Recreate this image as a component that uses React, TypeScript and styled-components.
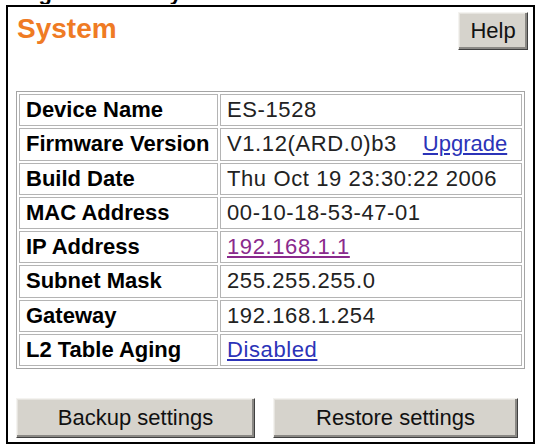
import styled, { createGlobalStyle } from "styled-components";

const GlobalStyle = createGlobalStyle`
  html, body {
    margin: 0;
    padding: 0;
    background: #ffffff;
  }
  body {
    font-family: "Liberation Sans", Arial, sans-serif;
  }
`;

type Row = {
  label: string;
  value: string;
  kind?: "link" | "visited";
  extra?: string;
};

const rows: Row[] = [
  { label: "Device Name", value: "ES-1528" },
  { label: "Firmware Version", value: "V1.12(ARD.0)b3", extra: "Upgrade" },
  { label: "Build Date", value: "Thu Oct 19 23:30:22 2006" },
  { label: "MAC Address", value: "00-10-18-53-47-01" },
  { label: "IP Address", value: "192.168.1.1", kind: "visited" },
  { label: "Subnet Mask", value: "255.255.255.0" },
  { label: "Gateway", value: "192.168.1.254" },
  { label: "L2 Table Aging", value: "Disabled", kind: "link" },
];

const App = () => {
  return (
    <>
      <GlobalStyle />
      <Caption>
        <span>Figure 32</span>
        <span>System</span>
      </Caption>
      <Frame>
        <Header>
          <Title>System</Title>
          <Button $w={70}>Help</Button>
        </Header>
        <InfoTable>
          <tbody>
            {rows.map((r) => (
              <tr key={r.label}>
                <Label>{r.label}</Label>
                <Value>
                  {r.kind ? (
                    <Link $visited={r.kind === "visited"}>{r.value}</Link>
                  ) : (
                    r.value
                  )}
                  {r.extra && <Link $gap>{r.extra}</Link>}
                </Value>
              </tr>
            ))}
          </tbody>
        </InfoTable>
        <Actions>
          <Button $w={239}>Backup settings</Button>
          <Button $w={245}>Restore settings</Button>
        </Actions>
      </Frame>
    </>
  );
};
export default App;

const Caption = styled.div`
  height: 4px;
  overflow: hidden;
  display: flex;
  align-items: flex-end;
  gap: 38px;
  padding-left: 19px;
  span {
    font-size: 22px;
    line-height: 23px;
    font-weight: bold;
    color: #000;
  }
`;

const Frame = styled.div`
  box-sizing: border-box;
  width: 529px;
  margin: 1px 0 0 6px;
  border: 2px solid #000;
  padding: 5px 5px 4px 8px;
`;

const Header = styled.div`
  display: flex;
  justify-content: space-between;
  align-items: flex-start;
  height: 38px;
`;

const Title = styled.h1`
  margin: 3px 0 0 1px;
  font-size: 28px;
  line-height: 28px;
  font-weight: bold;
  color: #ef7b24;
`;

const Button = styled.button<{ $w: number }>`
  box-sizing: border-box;
  width: ${(p) => p.$w}px;
  height: 38px;
  padding: 0;
  font-family: "Liberation Sans", Arial, sans-serif;
  font-size: 22px;
  color: #111;
  background: #d6d3cc;
  border: 1px solid;
  border-color: #f4f3f0 #404040 #404040 #f4f3f0;
  box-shadow: inset -2px -2px 0 #8a8884, inset 1px 1px 0 #e6e4df;
  cursor: pointer;
`;

const InfoTable = styled.table`
  width: 509px;
  height: 278px;
  margin-top: 41px;
  border: 1px solid #a4a4a4;
  border-spacing: 2px;
  font-size: 22px;
  td {
    border: 1px solid #b4b4b4;
    padding: 0 6px;
  }
`;

const Label = styled.td`
  width: 185px;
  font-weight: bold;
  color: #000;
`;

const Value = styled.td`
  color: #222;
  letter-spacing: 0.6px;
`;

const Link = styled.a<{ $visited?: boolean; $gap?: boolean }>`
  color: ${(p) => (p.$visited ? "#8a2a8c" : "#2b33b8")};
  text-decoration: underline;
  margin-left: ${(p) => (p.$gap ? "26px" : "0")};
  letter-spacing: ${(p) => (p.$gap ? "0" : "0.6px")};
  cursor: pointer;
`;

const Actions = styled.div`
  display: flex;
  gap: 18px;
  margin-top: 29px;
  ${Button} {
    height: 40px;
  }
`;
